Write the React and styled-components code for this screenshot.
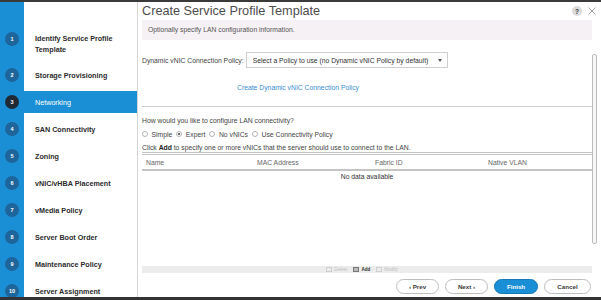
import React from 'react';
import styled, { createGlobalStyle } from 'styled-components';

const Global = createGlobalStyle`
  html, body { margin: 0; padding: 0; background: #fff; overflow: hidden; }
  body { font-family: "Liberation Sans", Arial, sans-serif; }
`;

const Frame = styled.div`
  width: 601px;
  height: 300px;
  box-sizing: border-box;
  border-top: 2px solid #3a3a3a;
  border-bottom: 3px solid #333;
  display: flex;
  overflow: hidden;
`;

const Sidebar = styled.nav`
  width: 137px;
  flex: none;
  box-sizing: border-box;
  background: linear-gradient(to right, #1b8fd5 24px, #fff 24px);
  display: flex;
  flex-direction: column;
  gap: 5px;
  padding-top: 25.5px;
`;

const Step = styled.div`
  display: flex;
  align-items: flex-start;
  padding: 4px 0;
  background: ${p => (p.$active ? '#1b8fd5' : 'transparent')};
`;

const Num = styled.span`
  width: 14px;
  height: 14px;
  flex: none;
  border-radius: 50%;
  margin: 0 16px 0 5px;
  background: ${p => (p.$active ? '#1f2a35' : '#1d659b')};
  color: #fff;
  font-size: 5.5px;
  font-weight: bold;
  display: flex;
  align-items: center;
  justify-content: center;
`;

const StepLabel = styled.span`
  font-size: 7.2px;
  line-height: 11px;
  padding-top: 1.5px;
  font-weight: ${p => (p.$active ? 'normal' : 'bold')};
  color: ${p => (p.$active ? '#fff' : '#2b2b2b')};
`;

const Main = styled.main`
  flex: 1;
  position: relative;
  border-left: 1px solid #d6d6d6;
  padding: 0 9px 0 4px;
  display: flex;
  flex-direction: column;
  font-size: 6.8px;
  color: #444;
  min-width: 0;
`;

const Header = styled.header`
  height: 18px;
  flex: none;
  display: flex;
  align-items: center;
  justify-content: space-between;
  margin-right: -4px;
`;

const Title = styled.h1`
  margin: 0;
  font-weight: normal;
  font-size: 12.7px;
  line-height: 18px;
  color: #4d4d4d;
`;

const HeaderTools = styled.div`
  display: flex;
  align-items: center;
  gap: 6px;
`;

const HelpIcon = styled.span`
  width: 10px;
  height: 10px;
  border-radius: 50%;
  background: #dcdcdc;
  color: #333;
  font-size: 6.5px;
  font-weight: bold;
  display: flex;
  align-items: center;
  justify-content: center;
`;

const InfoBand = styled.div`
  height: 20px;
  flex: none;
  background: #f6f1f4;
  padding-left: 6px;
  line-height: 20px;
  color: #555;
`;

const PolicyRow = styled.div`
  margin-top: 12px;
  height: 16px;
  flex: none;
  display: flex;
  align-items: center;
  gap: 2px;
  color: #444;
`;

const Select = styled.div`
  width: 202px;
  height: 16px;
  box-sizing: border-box;
  border: 1px solid #cfcfcf;
  padding: 0 5px 0 6px;
  display: flex;
  align-items: center;
  justify-content: space-between;
  color: #333;
  background: #fff;
`;

const Caret = styled.span`
  width: 0;
  height: 0;
  border-left: 2px solid transparent;
  border-right: 2px solid transparent;
  border-top: 3px solid #555;
`;

const Link = styled.a`
  display: block;
  margin-top: 15px;
  line-height: 10px;
  padding-left: 95px;
  color: #3a8dcc;
  text-decoration: none;
`;

const Separator = styled.div`
  margin-top: 12.5px;
  height: 1px;
  flex: none;
  background: #cbcbcb;
`;

const TextLine = styled.div`
  margin-top: ${p => p.$top}px;
  line-height: ${p => p.$lh || 10}px;
  color: #444;
  b { color: #222; }
`;

const RadioRow = styled.div`
  margin-top: 3px;
  height: 10px;
  display: flex;
  align-items: center;
  gap: 4px;
`;

const RadioOption = styled.label`
  display: flex;
  align-items: center;
  gap: 3.5px;
  color: #444;
`;

const RadioDot = styled.span`
  width: 6px;
  height: 6px;
  box-sizing: border-box;
  border-radius: 50%;
  border: 1px solid #b5b5b5;
  background: #fff;
  display: flex;
  align-items: center;
  justify-content: center;
  &::after {
    content: '';
    width: 2px;
    height: 2px;
    border-radius: 50%;
    background: ${p => (p.$checked ? '#333' : 'transparent')};
  }
`;

const Table = styled.div`
  margin-top: 0.5px;
  flex: 1;
  display: flex;
  flex-direction: column;
  border-top: 3px double #c4c4c4;
`;

const HeadRow = styled.div`
  height: 14px;
  display: grid;
  grid-template-columns: 111px 118px 113px 1fr;
  align-items: center;
  padding-left: 4px;
  border-bottom: 2px solid #c4c4c4;
  color: #666;
`;

const Body = styled.div`
  flex: 1;
  text-align: center;
  padding-top: 1px;
  line-height: 10px;
  color: #333;
`;

const Toolbar = styled.div`
  height: 7px;
  flex: none;
  background: #ececec;
  display: flex;
  align-items: center;
  justify-content: center;
  gap: 6px;
  padding-right: 10px;
  font-size: 4.6px;
`;

const ToolItem = styled.span`
  display: flex;
  align-items: center;
  gap: 2px;
  color: ${p => (p.$enabled ? '#333' : '#c2c2c2')};
  font-weight: ${p => (p.$enabled ? 'bold' : 'normal')};
`;

const ToolIcon = styled.span`
  width: 4px;
  height: 3px;
  border: 0.5px solid ${p => (p.$enabled ? '#777' : '#cfcfcf')};
  background: ${p => (p.$enabled ? '#bbb' : 'transparent')};
`;

const ButtonRow = styled.div`
  margin-top: 6px;
  margin-right: 1px;
  margin-bottom: 3px;
  height: 15px;
  flex: none;
  display: flex;
  justify-content: flex-end;
  gap: 6px;
`;

const Button = styled.button`
  width: ${p => p.$w}px;
  height: 15px;
  box-sizing: border-box;
  border-radius: 8px;
  border: 1px solid ${p => (p.$primary ? '#1778b8' : '#bdbdbd')};
  background: ${p => (p.$primary ? '#1b8fd6' : '#fff')};
  color: ${p => (p.$primary ? '#fff' : '#3a3a3a')};
  font-family: "Liberation Sans", Arial, sans-serif;
  font-size: 6.2px;
  font-weight: bold;
  padding: 0;
`;

const ScrollThumb = styled.div`
  position: absolute;
  left: 454px;
  top: 52px;
  width: 5px;
  height: 190px;
  box-sizing: border-box;
  border: 1px solid #bcbcbc;
  border-radius: 2px;
  background: #f7f7f7;
`;

const steps = [
  'Identify Service Profile Template',
  'Storage Provisioning',
  'Networking',
  'SAN Connectivity',
  'Zoning',
  'vNIC/vHBA Placement',
  'vMedia Policy',
  'Server Boot Order',
  'Maintenance Policy',
  'Server Assignment',
];

const radios = [
  { label: 'Simple' },
  { label: 'Expert', checked: true },
  { label: 'No vNICs' },
  { label: 'Use Connectivity Policy' },
];

export default function App() {
  return (
    <>
      <Global />
      <Frame>
        <Sidebar>
          {steps.map((s, i) => (
            <Step key={s} $active={i === 2}>
              <Num $active={i === 2}>{i + 1}</Num>
              <StepLabel $active={i === 2}>
                {i === 0 ? (<>Identify Service Profile<br />Template</>) : s}
              </StepLabel>
            </Step>
          ))}
        </Sidebar>
        <Main>
          <Header>
            <Title>Create Service Profile Template</Title>
            <HeaderTools>
              <HelpIcon>?</HelpIcon>
              <svg width="8" height="8" viewBox="0 0 8 8">
                <path d="M0.5 0.5 L7.5 7.5 M7.5 0.5 L0.5 7.5" stroke="#9a9a9a" strokeWidth="0.9" />
              </svg>
            </HeaderTools>
          </Header>
          <InfoBand>Optionally specify LAN configuration information.</InfoBand>
          <PolicyRow>
            <span>Dynamic vNIC Connection Policy:</span>
            <Select>
              <span>Select a Policy to use (no Dynamic vNIC Policy by default)</span>
              <Caret />
            </Select>
          </PolicyRow>
          <Link>Create Dynamic vNIC Connection Policy</Link>
          <Separator />
          <TextLine $top={9.5}>How would you like to configure LAN connectivity?</TextLine>
          <RadioRow>
            {radios.map(r => (
              <RadioOption key={r.label}>
                <RadioDot $checked={r.checked} />
                {r.label}
              </RadioOption>
            ))}
          </RadioRow>
          <TextLine $top={3.5} $lh={9}>
            Click <b>Add</b> to specify one or more vNICs that the server should use to connect to the LAN.
          </TextLine>
          <Table>
            <HeadRow>
              <span>Name</span>
              <span>MAC Address</span>
              <span>Fabric ID</span>
              <span>Native VLAN</span>
            </HeadRow>
            <Body>No data available</Body>
          </Table>
          <Toolbar>
            <ToolItem><ToolIcon />Delete</ToolItem>
            <ToolItem $enabled><ToolIcon $enabled />Add</ToolItem>
            <ToolItem><ToolIcon />Modify</ToolItem>
          </Toolbar>
          <ButtonRow>
            <Button $w={43}>‹ Prev</Button>
            <Button $w={43}>Next ›</Button>
            <Button $w={44} $primary>Finish</Button>
            <Button $w={47}>Cancel</Button>
          </ButtonRow>
          <ScrollThumb />
        </Main>
      </Frame>
    </>
  );
}
